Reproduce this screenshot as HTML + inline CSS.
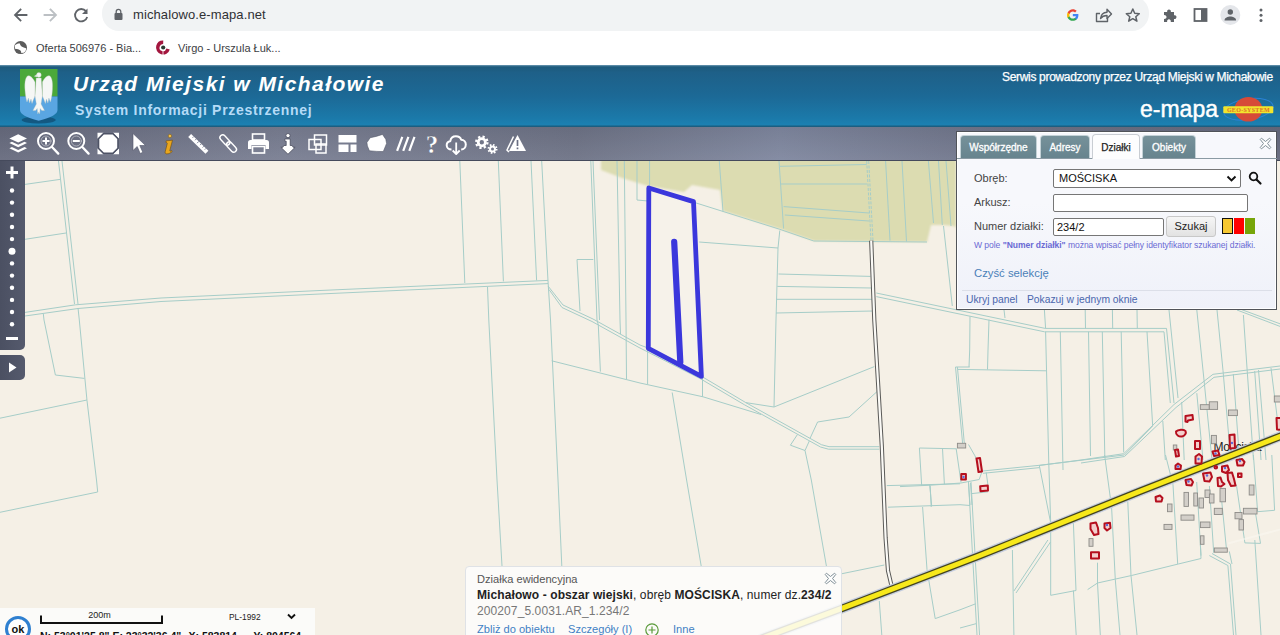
<!DOCTYPE html>
<html><head><meta charset="utf-8">
<style>
*{box-sizing:border-box;margin:0;padding:0}
html,body{width:1280px;height:635px;overflow:hidden;background:#fff;font-family:"Liberation Sans",sans-serif}
.abs{position:absolute}
#chrome{position:absolute;left:0;top:0;width:1280px;height:66px;background:#fff}
#omni{position:absolute;left:102px;top:-4px;width:1047px;height:35px;border-radius:17px;background:#f1f3f4}
#url{position:absolute;left:133px;top:7px;font-size:13px;line-height:16px;color:#303134;letter-spacing:0.1px}
.bm{position:absolute;top:41px;font-size:11px;line-height:14px;color:#3c4043}
#header{position:absolute;left:0;top:65px;width:1280px;height:62px;background:linear-gradient(#6f9bb5 0%,#1d5a7c 3%,#1e6088 12%,#1c6996 50%,#1b79a9 85%,#1c80b1 96%,#1a5675 100%)}
#title{position:absolute;left:73px;top:6px;font-size:21px;line-height:26px;font-weight:bold;font-style:italic;color:#fff;letter-spacing:1.45px;white-space:nowrap}
#sub{position:absolute;left:75px;top:37px;font-size:14px;line-height:16px;font-weight:bold;color:#b5dbf7;letter-spacing:0.7px;white-space:nowrap}
#serwis{position:absolute;left:1002px;top:5px;font-size:12px;line-height:14px;color:#fff;white-space:nowrap;letter-spacing:-0.32px;-webkit-text-stroke:0.25px #fff}
#emapa{position:absolute;left:1140px;top:31px;font-size:23px;line-height:26px;color:#fff;letter-spacing:0px;-webkit-text-stroke:0.45px #fff}
#toolbar{position:absolute;left:0;top:127px;width:1280px;height:34px;background:linear-gradient(rgba(0,0,0,.06),rgba(255,255,255,.05)),linear-gradient(90deg,#676b7e 0%,#797e92 22%,#6e7386 45%,#7f879f 61%,#6f7489 78%,#666a7e 100%);border-bottom:1px solid #454a5c}
#map{position:absolute;left:0;top:161px;width:1280px;height:474px;background:#f5f0e6;overflow:hidden}
#map svg{position:absolute;left:0;top:0}

#zoomctl{position:absolute;left:0;top:161px;width:25px;height:189px;background:linear-gradient(90deg,#4b5062,#555a6d);border-bottom-right-radius:5px}
#playbox{position:absolute;left:0;top:355px;width:25px;height:25px;background:linear-gradient(90deg,#4b5062,#555a6d);border-radius:0 5px 5px 0}
#panel{position:absolute;left:956px;top:131px;width:321px;height:179px;background:linear-gradient(#f7f8fc 40%,#eff1f9);border:1px solid #505359;box-shadow:0 0 0 1px rgba(255,255,255,.9) inset}
.tab{position:absolute;top:3px;height:23px;border:1px solid #c3d1d6;border-bottom:none;border-radius:4px 4px 0 0;background:linear-gradient(#76919a,#67848e);color:#fff;font-size:10px;line-height:23px;text-align:center;-webkit-text-stroke:0.3px #fff}
.tab.act{background:#fdfdfe;color:#222;border-color:#c9cdd3;top:2px;height:25px;line-height:25px;-webkit-text-stroke:0.25px #222}
#tabline{position:absolute;left:0;top:26px;width:320px;height:1px;background:#8a9aa3}
.lbl{position:absolute;left:17px;font-size:11px;line-height:14px;color:#444}
.inp{position:absolute;background:#fff;border:1px solid #767676;border-radius:2px;font-size:11px;line-height:16px;color:#111;padding-left:4px}
#hint{position:absolute;left:17px;top:108px;font-size:8.550px;line-height:10px;color:#6a6ad4;white-space:nowrap;letter-spacing:-0.05px}
#czysc{position:absolute;left:17px;top:134px;font-size:11.300px;line-height:14px;color:#4a7fb8}
#sep{position:absolute;left:5px;top:157.500px;width:310px;height:1px;background:#dcdfe8}
.lnk{position:absolute;top:161px;font-size:10.300px;line-height:13px;color:#4a66ad;white-space:nowrap}
#popup{position:absolute;left:465px;top:566px;width:377px;height:80px;background:rgba(253,253,252,.86);border:1px solid #dfe2e6;border-radius:4px 4px 0 0}
#popup div{position:absolute;left:11px;white-space:nowrap}
#status{position:absolute;left:0;top:608px;width:315px;height:30px;background:#fbfbf9}
</style></head><body>
<div id="chrome">
 <div id="omni"></div>
 <div id="url">michalowo.e-mapa.net</div>
 <div class="bm" style="left:36px">Oferta 506976 - Bia...</div>
 <div class="bm" style="left:178px">Virgo - Urszula Łuk...</div>
 <svg class="abs" style="left:0;top:0" width="1280" height="66" viewBox="0 0 1280 66">
  <!-- back -->
  <g fill="none" stroke="#5f6368" stroke-width="1.8" stroke-linecap="square"><path d="M26.5 15H15.5M20.5 9.5L15 15l5.5 5.5"/></g>
  <g fill="none" stroke="#bcc0c4" stroke-width="1.8" stroke-linecap="square"><path d="M44.5 15h11M50.5 9.5L56 15l-5.500 5.500"/></g>
  <!-- reload -->
  <path d="M86 11.200A6.200 6.200 0 1 0 87.200 17" fill="none" stroke="#5f6368" stroke-width="1.800"/>
  <path d="M87.500 8.500v5.500h-5.500z" fill="#5f6368"/>
  <!-- lock -->
  <rect x="114.500" y="13" width="8" height="7" rx="1" fill="#5f6368"/>
  <path d="M116.200 13.500v-1.800a2.300 2.300 0 0 1 4.600 0v1.800" fill="none" stroke="#5f6368" stroke-width="1.300"/>
  <!-- globe -->
  <circle cx="20.500" cy="47.600" r="6.500" fill="#5c5c5c"/>
  <path d="M15 45.200C16.500 43.800 18.500 43.200 20 43.600C20 45.500 21.500 47.400 26 48.300C26.300 50 25.500 51.800 24 52.800C23 52.800 21.800 53.200 21.200 52.800C21.500 51 20 49.300 15 48.800C14.700 47.500 14.700 46.200 15 45.200Z" fill="#fff"/>
  <!-- virgo -->
  <circle cx="163" cy="47.600" r="5.250" fill="none" stroke="#a3163e" stroke-width="3.500" stroke-dasharray="22.900 10.100" transform="rotate(15 163 47.600)"/>
  <path d="M163 50.500V55" stroke="#fff" stroke-width=".8"/>
  <circle cx="163.200" cy="47.500" r="2.100" fill="#2b3a32"/>
  <!-- G -->
  <g transform="translate(1067 9.200) scale(0.485)">
   <path d="M23.500 12.300c0-.8-.1-1.600-.2-2.300H12v4.500h6.500c-.3 1.500-1.100 2.700-2.400 3.600v3h3.800c2.300-2.100 3.600-5.200 3.600-8.800z" fill="#4285f4"/>
   <path d="M12 24c3.200 0 6-1.100 7.900-2.900l-3.800-3c-1.100.7-2.500 1.200-4.100 1.200-3.100 0-5.800-2.100-6.700-5H1.300v3.100C3.300 21.300 7.300 24 12 24z" fill="#34a853"/>
   <path d="M5.300 14.300c-.2-.7-.4-1.500-.4-2.300s.1-1.600.4-2.300V6.600H1.300C.5 8.200 0 10 0 12s.5 3.800 1.300 5.400l4-3.100z" fill="#fbbc05"/>
   <path d="M12 4.800c1.800 0 3.300.6 4.600 1.800l3.400-3.400C17.900 1.200 15.200 0 12 0 7.300 0 3.300 2.700 1.300 6.600l4 3.100c.9-2.900 3.600-4.900 6.700-4.900z" fill="#ea4335"/>
  </g>
  <!-- share -->
  <g fill="none" stroke="#5f6368" stroke-width="1.400" stroke-linejoin="round"><path d="M1100 13.500h-3.500v8h11v-3.500"/><path d="M1100.500 18.500c.5-4 3-6 6.500-6.200v-3l4.500 4.700-4.500 4.500v-3c-3 0-5 1-6.500 3z"/></g>
  <!-- star -->
  <path d="M1132.800 9l1.900 4.300 4.600.4-3.500 3 1.100 4.500-4.100-2.500-4.100 2.500 1.100-4.500-3.500-3 4.600-.4z" fill="none" stroke="#5f6368" stroke-width="1.500" stroke-linejoin="round"/>
  <!-- puzzle -->
  <path d="M1164 12h3.200a1.900 1.900 0 1 1 3.600 0h3.200v3.300a1.900 1.900 0 1 1 0 3.600V22h-3.300a1.900 1.900 0 1 0-3.500 0H1164v-3.200a1.900 1.900 0 1 0 0-3.600z" fill="#5f6368"/>
  <!-- side panel -->
  <rect x="1194.500" y="9" width="12" height="12" fill="none" stroke="#5f6368" stroke-width="1.800"/><rect x="1201" y="9" width="5.500" height="12" fill="#5f6368"/>
  <!-- profile -->
  <circle cx="1230.300" cy="15" r="10" fill="#e4e6ea"/><circle cx="1230.300" cy="12" r="2.700" fill="#5f6368"/><path d="M1224.500 20.500c0-3 3.500-4 5.800-4s5.800 1 5.800 4z" fill="#5f6368"/>
  <!-- dots -->
  <circle cx="1261" cy="10" r="1.500" fill="#5f6368"/><circle cx="1261" cy="15.300" r="1.500" fill="#5f6368"/><circle cx="1261" cy="20.600" r="1.500" fill="#5f6368"/>
 </svg>
</div>
<div id="header">
 <svg class="abs" style="left:0;top:0" width="1280" height="62" viewBox="0 65 1280 62">
 <ellipse cx="38.700" cy="120" rx="17" ry="3.500" fill="#0d3a5c" opacity=".55"/>
 <clipPath id="sh"><path d="M20 69h37.500v41c0 4-6 7.500-18.800 10.800C26 117.500 20 114 20 110z"/></clipPath>
 <g clip-path="url(#sh)"><rect x="19" y="68" width="40" height="28.500" fill="#4ba83a"/><rect x="19" y="96.500" width="40" height="26" fill="#5aa6e2"/></g>
 <g fill="#f5f7f5" stroke="#b9c4c0" stroke-width=".35">
  <path d="M35 82C33 78 30 75 27.500 76C25 78 24.500 84 25 90C25.300 95 26 99 27 102L28.500 98L29.500 103L31 99L32 103.500L33.500 99.500L35 96Z"/>
  <path d="M42.400 82C44.400 78 47.400 75 49.900 76C52.400 78 52.900 84 52.400 90C52.100 95 51.400 99 50.400 102L48.900 98L47.900 103L46.400 99L45.400 103.500L43.900 99.500L42.400 96Z"/>
  <path d="M36.200 78L41.200 78L42.400 96L41 104L44.500 110.500L41.800 110.500L40.200 108.500L39.600 114L38.700 112L37.800 114L37.200 108.500L35.600 110.500L32.900 110.500L36.400 104L35 96Z"/>
  <circle cx="38.900" cy="75" r="2.400"/><path d="M36.800 74.500L34.300 76.200L37 77Z"/>
 </g>
 <!-- geosystem -->
 <ellipse cx="1248.400" cy="109.300" rx="25" ry="10.500" fill="none" stroke="#2b82d6" stroke-width="1" transform="rotate(-8 1248.400 109.300)"/>
 <ellipse cx="1248.400" cy="109.300" rx="14" ry="12.300" fill="#d64a38"/>
 <rect x="1223.300" y="106.200" width="50" height="7" rx="1" fill="#f1e52e"/>
 <text x="1248.400" y="112" font-family="Liberation Serif" font-size="6" font-weight="bold" fill="#e0702a" text-anchor="middle" letter-spacing=".3">GEO-SYSTEM</text>
</svg>
 <div id="title">Urząd Miejski w Michałowie</div>
 <div id="sub">System Informacji Przestrzennej</div>
 <div id="serwis">Serwis prowadzony przez Urząd Miejski w Michałowie</div>
 <div id="emapa">e-mapa</div>
</div>
<div id="toolbar">
<svg class="abs" style="left:0;top:0" width="540" height="33" viewBox="0 127 540 33">
 <g fill="#fff" stroke="none">
  <!-- layers -->
  <path d="M18.200 134.300l8.800 4.100-8.800 4.100-8.800-4.100z"/>
  <path d="M11.900 141.700L9.400 142.900l8.800 4.300 8.800-4.300-2.500-1.200-6.300 3.100z"/>
  <path d="M11.900 147L9.400 148.200l8.800 4.300 8.800-4.300-2.500-1.200-6.300 3.100z"/>
  <path d="M11.900 149.500L9.400 150.700l8.800 3.100 8.800-3.100-2.500-1.200-6.300 2.400z" opacity=".0"/>
 </g>
 <!-- zoom in -->
 <g fill="none" stroke="#fff" stroke-width="2" stroke-linecap="round">
  <circle cx="46" cy="141" r="8"/><path d="M52 147l6.300 6.600" stroke-width="2.300"/>
  <circle cx="46" cy="141" r="5" stroke-width=".8" opacity=".55"/><path d="M46 137.500v7M42.500 141h7" stroke-width="2" stroke-linecap="butt"/>
  <circle cx="76.300" cy="141" r="8"/><path d="M82.300 147l6.300 6.600" stroke-width="2.300"/>
  <circle cx="76.300" cy="141" r="5" stroke-width=".8" opacity=".55"/><path d="M72.800 141h7" stroke-width="2" stroke-linecap="butt"/>
 </g>
 <!-- full extent -->
 <g fill="#fff">
  <path d="M97.500 132.800h6l-6 6zM119 132.800v6l-6-6zM97.500 154.200v-6l6 6zM119 154.200h-6l6-6z"/>
  <path d="M103.500 133.800h9.500l5 5v9.400l-5 5h-9.500l-5-5v-9.400z" stroke="#4e5366" stroke-width="1.600"/>
 </g>
 <!-- pointer -->
 <path d="M133 133.500v17l4.200-4 3 7 2.600-1.200-3-6.800h5.700z" fill="#fff" stroke="#50556a" stroke-width="0.600"/>
 <!-- info i -->
 <g stroke-linejoin="round"><circle cx="169.900" cy="136" r="1.700" fill="#f0c04a" stroke="#7a5510" stroke-width=".5"/>
 <path d="M166.300 140.800l6.200-.6-2.700 10.300c-.2.700.4.900 1 .5l.8-.5.500 1.100c-1.500 1.400-3.300 2.300-5.200 2.300-1.500 0-2-.9-1.700-2.200l2-7.900c.2-.8-.1-1.200-1.300-1.400z" fill="#e9a61e" stroke="#6e4c0e" stroke-width=".6"/></g>
 <!-- ruler -->
 <g transform="rotate(44 198.300 143.800)"><rect x="186.300" y="141.700" width="24" height="4.200" fill="#fff"/><path d="M190 141.700v1.800M193.500 141.700v1.800M197 141.700v2.500M200.500 141.700v1.800M204 141.700v1.800M207 141.700v1.800" stroke="#7a7f93" stroke-width=".9"/></g>
 <!-- chain -->
 <g fill="none" stroke="#fff" stroke-width="1.400" transform="rotate(47 228.200 143.500)"><rect x="217.400" y="140.700" width="12" height="5.600" rx="2.800"/><rect x="227" y="140.700" width="12" height="5.600" rx="2.800"/></g>
 <!-- printer -->
 <g fill="#fff"><rect x="252.500" y="134" width="12" height="6" fill="none" stroke="#fff" stroke-width="1.600"/><path d="M250.500 140h16a2.500 2.500 0 0 1 2.500 2.500v6.500h-3.500v-4h-14v4h-3.500v-6.500a2.500 2.500 0 0 1 2.500-2.500z"/><rect x="252.500" y="146.500" width="12" height="6.500" fill="none" stroke="#fff" stroke-width="1.600"/></g>
 <!-- info download -->
 <g fill="#fff" stroke="#3d4152" stroke-width="0.700"><circle cx="288" cy="135.600" r="2.100"/><path d="M284.800 139h5.400v6.500h2l.9 1.800h2l-7.100 6.900-7.100-6.900h2l.9-1.800h2.400v-4.300h-1.400z"/></g>
 <!-- overlapping squares -->
 <g fill="none" stroke="#fff" stroke-width="1.500"><rect x="314.500" y="135" width="12" height="10"/><rect x="309" y="139.500" width="12" height="10"/><rect x="316" y="144" width="10" height="9"/></g>
 <!-- layout -->
 <g fill="#fff"><rect x="338.500" y="135" width="18" height="7.500"/><rect x="338.500" y="144.500" width="10" height="7.500"/><rect x="350.500" y="144.500" width="6" height="7.500"/></g>
 <!-- polygon -->
 <path d="M366.900 142.600l3.300-4.900 6-1.300 6.300-2 3.300 4.900.8 4.100-3.300 8.200-6.500-.2-7.400-.6-2-4.900z" fill="#fff" stroke="#555a6c" stroke-width=".6"/>
 <!-- /// -->
 <path d="M402.300 136.800l-5.200 14M408.400 136.800l-5.200 14M414.500 136.800l-5.200 14" stroke="#fff" stroke-width="2.200" fill="none"/>
 <!-- ? -->
 <text x="425.800" y="152.500" font-family="Liberation Serif" font-size="25" font-weight="bold" fill="#fff" stroke="#555a6c" stroke-width=".3">?</text>
 <!-- cloud -->
 <g fill="none" stroke="#fff" stroke-width="2" stroke-linejoin="round"><path d="M451.500 149.500c-3 0-4.800-2-4.800-4.200s1.500-3.900 3.600-4.100c.4-3 2.800-4.900 5.600-4.900 2.500 0 4.600 1.400 5.300 3.500 2.700.1 4.600 2.100 4.600 4.700 0 2.700-2 4.900-4.600 4.900"/><path d="M456.200 142.500v11M452.700 150.500l3.500 3.500 3.500-3.500" stroke-width="1.800"/></g>
 <!-- gears -->
 <g fill="none" stroke="#fff"><circle cx="481.800" cy="142.300" r="3.600" stroke-width="2.800"/><circle cx="481.800" cy="142.300" r="5.700" stroke-width="2.200" stroke-dasharray="2.240 2.240"/><circle cx="492.500" cy="148.900" r="2.500" stroke-width="2"/><circle cx="492.500" cy="148.900" r="4.100" stroke-width="1.800" stroke-dasharray="1.610 1.610"/></g>
 <!-- warning -->
 <g><path d="M517.500 135l8.500 16h-17z" fill="#fff"/><path d="M513.500 136.500l-6.500 13.500 2 2" fill="none" stroke="#fff" stroke-width="1.500"/><path d="M517.500 140v6M517.500 147.500v1.800" stroke="#6a6f84" stroke-width="1.700"/></g>
</svg>
</div>
<div id="map">
<svg id="mapsvg" width="1280" height="474" viewBox="0 161 1280 474">
<defs><filter id="bl" x="-5%" y="-5%" width="110%" height="110%"><feGaussianBlur stdDeviation="1.200"/></filter></defs>
<!-- green area -->
<path filter="url(#bl)" fill="#dcdcb1" d="M601 159L601 170L622 178L648 186L684 192L692 185L720 190L723 211L780 229L814 241L927 242L931 225L943 225L954 226L956 228L956 159Z"/>
<g fill="none" stroke="#a6cdc8" stroke-width="1">
<!-- top-left block -->
<path d="M58.500 161L74.500 304M62 161L78 304"/>
<path d="M25 184.400L60 179.400M25 239.300L66 233"/>
<path d="M25 312.400L75.600 304.800L161 298L320 290.500L548 280.400"/>
<path d="M25 316L78 308.500L161 301.500L320 294L548 283.600"/>
<path d="M43.300 313.700L44 320L55.400 375L84.400 378.400"/>
<path d="M78 308L79.300 320L87 400.600L96.500 480L97.700 492L0 512.300"/>
<path d="M0 418.200L87 400"/>
<!-- mid verticals -->
<path d="M459.800 161L464.800 283M498.300 161L503.400 281.400M531 161L536.600 280.400"/>
<path d="M541.700 161L548 281L550.500 320L558 480L561.800 566"/>
<path d="M487.500 287L488.800 320L497 480L502 566"/>
<path d="M590.800 161L597 320L598.300 325L600.400 371.600M593 161L599.500 320"/>
<path d="M617 161L620 320L620.500 334M624.300 161L626 320L626.500 379"/>
<path d="M637 161L637 200L648 201"/>
<path d="M577 259.500L593.300 259.500M577 259.500L580 311"/>
<!-- diagonal ditch -->
<path d="M548 286L563 305L593 319L640 345L648 348L701 376L745.800 402.600L821.400 444.700L829 446.700L879.300 446.700"/>
<path d="M549 289.500L562 307.500L592 321.500L639 347.500L700 378.500L744.500 404.800L820.500 447L828.500 449.200L879.300 449.200"/>
<path d="M551.700 360.800L640 383L703 396.800L761 414.500"/>
<path d="M647.600 348L647.600 384.200M702.500 376L702.500 396.800"/>
<!-- around selected parcel -->
<path d="M649.600 161L649.600 186M719.300 161L723 211.600"/>
<path d="M693 202L779.800 229.300L813.800 241L927 242"/>
<path d="M779 161L783.600 228.500M779.800 230.500L778 248L776 320L774 407"/>
<path d="M699.200 242L778 248"/>
<path d="M780 166.300L866.700 164.500M781 184L867 184M783.600 206.600L869 213M784.800 215L869 221"/>
<path d="M866.700 161L871 240.600M868.700 161L873 240.600" stroke-dasharray="3 1.500"/>
<path d="M885.600 161L890 240.600M902 161L906.500 241.500M928.400 161L933.500 223M938.500 161L942.300 225M946 161L951 226"/>
<path d="M943.500 226L952.300 306"/>
<path d="M778.500 274L870.500 276.400M777.300 286.400L871.500 288M776.500 299.300L872.500 299.300M776 313L873 311"/>
<path d="M876.300 293L1045.200 328.400L1166.500 328.400L1174 403M876.300 296.600L1044.500 331.800L1164 331.800L1170.300 403"/>
<path d="M745.800 402.600L774 407L874.300 366.600"/>
<path d="M672.200 392.500L686.600 480L701.200 566"/>
<path d="M876.800 391.800L849 417L817.600 422L810 438.400"/>
<path d="M797.400 434.600L790.400 445.200L805 450.500L809.300 441"/>
<path d="M805 450.500L811.300 480L826.400 566"/>
<path d="M955.500 367L969.700 367M955.500 367L962.600 443.300M957.400 367L964.300 443M969.700 350L969 367M988 350L987.500 369.500M958 369.400L1046 370.800"/>
<path d="M919.400 448L956.700 448.800M919.400 448L921.700 485.900M942.500 448.500L944.400 484.200M956.200 448.800L961 482.300M968.500 444.500L975 455.900L981.500 472.900L979.200 479.500L961 483L930.700 485.200L900 486.600M930.200 485.500L931.200 507M968.500 483L970 505M970.500 483L972 505M986.200 472.400L987.900 484.700M970.900 493.700L988 491.800M982.700 471L1039.400 465.300M983 473.300L1039.700 467.600"/>
<path d="M842 573.700L884.300 565"/>
<path d="M886.800 485.600L960 483.800M1039.400 465.300L1124.400 455L1152.700 426M888 507.200L960 504.700L970 505.500"/>
<path d="M929.700 485L931.700 506M922.600 507L927 569.500L935.200 618.600L960 609.800L975.600 603.800"/>
<path d="M879.300 601L881.800 635"/>
<path d="M960 628L976 623.700"/>
<!-- right block under/around panel -->
<path d="M1004 310L1005 318M1044.400 310L1045.600 328.400M1085.200 310L1085.500 328.400M1112.400 310L1112.700 328.400M1137 310L1137.300 328.400"/>
<path d="M970 316.400L969.700 350M989 319.600L988 350"/>

<path d="M1045.600 331.800L1048.700 460L1050.700 523L1050.700 595.300L1076 590.500L1073.400 523"/>
<path d="M1060.300 331.800L1062.800 460L1063 470"/>
<path d="M1088.500 331.800L1090.500 456M1102.300 331.800L1104.800 456M1121.200 331.800L1123.700 452.400M1147 331.800L1152.700 426"/>
<path d="M1039 465.500L1081 460L1123.700 453.700L1174 404.500L1213 374.300L1280 366"/>
<path d="M1081 463L1124.500 456.500L1176 407.500L1214 377.300L1280 369"/>
<path d="M1169 310L1178 398M1196.800 310L1203.800 378L1212 460M1217 310L1223 370.500L1230.800 460M1243.400 315L1247 368L1253.500 460"/>
<path d="M1237 310L1280 326.400M1240 309L1280 323.800"/>
<path d="M1233.300 374L1239.600 460M1254.700 371L1261 460M1258.500 370L1266 460M1271 368L1280 440"/>
<path d="M1181.700 402L1184.200 460M1196.800 393.200L1203 460M1162.800 421L1165.300 460"/>
<!-- lower right -->
<path d="M1039.400 465.800L1050.700 523"/>
<path d="M1104.600 455L1111.600 507.400L1115.300 579.700L1120 635"/>
<path d="M1127.800 501.800L1131 575.500L1137 635"/>
<path d="M1087.600 589.600L1097.500 583L1131.500 575.500L1178.300 564L1201 558.500"/>
<path d="M1097.500 562.700L1097.500 583L1100.300 635"/>
<path d="M1165.500 455L1173 484.800L1177.700 564"/>
<path d="M1200.400 544.300L1201 558.500"/>
<path d="M1073.400 590.500L1076.200 635"/>
<path d="M968.500 482L977 635M971 482L979.500 635"/>
<path d="M1012.400 550L1013.900 635M1047.900 540L1013.900 591M1050.500 542L1016 593"/>
<path d="M1209.400 555.600L1227.900 565.500L1233.500 635M1212 553.500L1230.500 564L1236 635"/>
<path d="M1229.300 551.400L1232 564"/>
<path d="M1254.800 540L1261 635"/>
<path d="M1236.400 484.800L1244.900 542.900L1260.500 543.400L1254.800 508.900"/>
<path d="M1253.400 455L1257.600 511.700L1274.600 510.300L1271.800 455"/>
<path d="M1196.700 482L1201 555.600M1209.400 486L1213.700 552.800M1220.800 491.800L1226.400 548.500"/>
</g>
<path d="M1228 543.500L1280 529.500" fill="none" stroke="#faf7f1" stroke-width="2" opacity=".55"/>
<!-- narrow road -->
<path d="M871.200 240.600L874.300 320L881.800 446L883 475L885.600 538L888 570.700L891.400 585.300" fill="none" stroke="#5a5a58" stroke-width="4.200"/>
<path d="M871.200 240.600L874.300 320L881.800 446L883 475L885.600 538L888 570.700L891.400 585.300" fill="none" stroke="#fbfaf6" stroke-width="2.200"/>
<text x="1213.500" y="450.800" font-family="Liberation Sans" font-size="12" letter-spacing="-0.250" fill="#222">Mościska</text>
<!-- yellow road -->
<path d="M760 638.900L842.500 608.200L980 555.500L1140 491.300L1285 434.500" fill="none" stroke="#c4cde0" stroke-width="10"/>
<path d="M760 638.900L842.500 608.200L980 555.500L1140 491.300L1285 434.500" fill="none" stroke="#45441f" stroke-width="7.600"/>
<path d="M760 638.900L842.500 608.200L980 555.500L1140 491.300L1285 434.500" fill="none" stroke="#f7e81b" stroke-width="5"/>
<!-- grey buildings -->
<g fill="#d3cfc9" stroke="#8d8b87" stroke-width="0.900">
<rect x="1200.300" y="404.700" width="9" height="4.700"/><rect x="1209.300" y="401.800" width="8.300" height="7.600"/><rect x="1228.400" y="410" width="9" height="5.600"/><rect x="1274.300" y="396" width="7" height="6"/>
<rect x="1211.400" y="435.400" width="5" height="8.300"/><rect x="1173.300" y="445" width="3.500" height="5"/>
<rect x="1184" y="492.400" width="4.500" height="14"/><rect x="1193.800" y="493" width="3.700" height="13"/><rect x="1199" y="498" width="4.500" height="10"/><rect x="1205" y="490" width="5" height="7.500"/><rect x="1209.400" y="494" width="4.600" height="9"/><rect x="1220" y="488.400" width="5.500" height="13.400"/><rect x="1249.200" y="485" width="4.800" height="10"/>
<rect x="1167.500" y="504" width="4.500" height="7.700"/><rect x="1181" y="515" width="13" height="5.200"/><rect x="1164" y="524.400" width="8" height="5"/><rect x="1200.400" y="522" width="9.600" height="5.600"/><rect x="1214.300" y="508.300" width="8" height="6.200"/><rect x="1243.400" y="508.300" width="13.600" height="5.700"/><rect x="1235" y="512.500" width="7" height="6.300"/><rect x="1239" y="519.600" width="4.500" height="10.400"/><rect x="1200.400" y="535.800" width="3.600" height="8.500"/><rect x="1214.300" y="548" width="13" height="4.200"/><rect x="1089" y="538.600" width="4" height="7.700"/>
<rect x="957.400" y="443.300" width="8.300" height="4.700"/>
</g>
<!-- red buildings -->
<g fill="#f3cfcd" stroke="#b50f1e" stroke-width="2" stroke-linejoin="round">
<path d="M976.500 458.500L980 458L982 471.500L978.500 472Z"/><rect x="961.300" y="474" width="4.600" height="5.500"/><path d="M980.200 486.300L987.800 485.500L988 490.500L980.500 491.200Z"/>
<path d="M1090.500 523.500L1096 522.500L1098 528L1098.500 534L1094 535L1090.500 529Z"/><path d="M1104.500 523.500L1110 522.800L1110.500 528L1107 530.500L1104.500 528Z"/><rect x="1091" y="552.300" width="8" height="6.300"/>
<path d="M1155.500 497L1160 495.500L1162.500 498L1161.500 501.500L1156 501.500Z"/>
<path d="M1185.500 416L1192.500 415L1193 419.500L1188 420.500L1187.500 422L1185.500 421.500Z"/>
<path d="M1176 431.500C1178 429.500 1184 429 1185.500 431C1186.500 433 1185 436 1182 436.500C1179 437 1175.500 435 1176 431.500Z"/>
<rect x="1195" y="441" width="5" height="8"/>
<path d="M1175 450L1178 449.500L1179 456L1176 456.500Z"/>
<path d="M1175.500 465.500L1178 463.500L1181 465.500L1180.500 469L1175.500 469Z"/>
<path d="M1195.500 456.500L1199 454L1202 456.500L1201.500 463.500L1195.500 463.500Z"/>
<path d="M1212.500 451.500L1218 450.500L1219.500 455L1214 456Z"/>
<path d="M1229.500 435L1234.500 434.500L1235 448L1230 448.500Z"/>
<path d="M1236.500 460L1242 459L1244.500 462L1243 465.500L1237.500 465.500Z"/>
<path d="M1222 466.500L1227.500 465.500L1229 470L1226 473L1222 471.500Z"/>
<path d="M1203 473.500L1210.500 472.500L1212 477L1209.500 481.500L1204.500 481Z"/>
<path d="M1185.500 480L1191 479L1193 482L1191.500 485.500L1186.500 485Z"/>
<path d="M1217.500 478L1220.500 477.500L1222 482L1224.500 484L1221 486.500L1218 486Z"/>
<path d="M1227.500 473L1232 472.500L1234 479L1235.500 485.500L1231 486L1228 480Z"/>
<rect x="1238" y="473.500" width="3.500" height="3.500"/>
<circle cx="1215.800" cy="467.200" r="1.300"/>
<path d="M1276.500 418L1282 418L1282 430L1277 429.500Z"/>
</g>
<g fill="#5a6ad8"><circle cx="963.500" cy="477" r="1.200"/><circle cx="1178" cy="466.500" r="1.200"/><circle cx="1198.500" cy="459" r="1.200"/><circle cx="1215.500" cy="453.500" r="1.200"/><circle cx="1232" cy="443" r="1.200"/><circle cx="1240" cy="461" r="1.200"/><circle cx="1207" cy="475.500" r="1.200"/><circle cx="1188.500" cy="481.500" r="1.200"/><circle cx="1107" cy="525" r="1.200"/><circle cx="1225" cy="468" r="1.200"/></g>
<!-- selected parcel -->
<path d="M648.800 188L693.500 201.600L701.400 376.300L648.300 348.300Z" fill="rgba(255,255,255,.18)" stroke="#3b37dc" stroke-width="4.800" stroke-linejoin="round"/>
<path d="M674.200 241.800L680.300 362" fill="none" stroke="#3b37dc" stroke-width="6.200" stroke-linecap="round"/>
</svg>
</div>

<div id="zoomctl">
<svg class="abs" style="left:0;top:0" width="25" height="189" viewBox="0 161 25 189">
 <path d="M12 166.500v12M6 172.500h12" stroke="#fff" stroke-width="3"/>
 <g fill="#fff">
  <circle cx="12" cy="190.500" r="2.200"/><circle cx="12" cy="202.600" r="2.200"/><circle cx="12" cy="214.800" r="2.200"/><circle cx="12" cy="227" r="2.200"/><circle cx="12" cy="239.100" r="2.200"/>
  <circle cx="12" cy="251.300" r="3.500"/>
  <circle cx="12" cy="263.400" r="2.200"/><circle cx="12" cy="275.600" r="2.200"/><circle cx="12" cy="287.700" r="2.200"/><circle cx="12" cy="299.900" r="2.200"/><circle cx="12" cy="312" r="2.200"/><circle cx="12" cy="324.200" r="2.200"/>
 </g>
 <path d="M6 338.500h12" stroke="#fff" stroke-width="3"/>
</svg>
</div>
<div id="playbox"><svg class="abs" style="left:0;top:0" width="25" height="25"><path d="M9 7.500l7.500 5-7.500 5z" fill="#fff"/></svg></div>

<div id="panel">
 <div id="tabline"></div>
 <div class="tab" style="left:3px;width:77px">Współrzędne</div>
 <div class="tab" style="left:83px;width:50px">Adresy</div>
 <div class="tab act" style="left:135px;width:48px">Działki</div>
 <div class="tab" style="left:185px;width:54px">Obiekty</div>
 <svg class="abs" style="left:302px;top:5px" width="13" height="13" viewBox="0 0 16 16"><path d="M3 1.500L8 5.500 13 1.500 14.500 3 10.500 8 14.500 13 13 14.500 8 10.500 3 14.500 1.500 13 5.500 8 1.500 3z" fill="#fff" stroke="#7a8a92" stroke-width="1.200" stroke-linejoin="round"/></svg>
 <div class="lbl" style="top:39px">Obręb:</div>
 <div class="inp" style="left:96px;top:37px;width:188px;height:19px;padding-left:5px;line-height:17px">MOŚCISKA
  <svg class="abs" style="right:3px;top:5px" width="11" height="8" viewBox="0 0 11 8"><path d="M1.500 1.500l4 4 4-4" fill="none" stroke="#111" stroke-width="1.900"/></svg>
 </div>
 <svg class="abs" style="left:290px;top:38px" width="16" height="16" viewBox="0 0 16 16"><circle cx="6.500" cy="6.500" r="3.800" fill="none" stroke="#111" stroke-width="1.800"/><path d="M9.500 9.500l4 4" stroke="#111" stroke-width="2.200" stroke-linecap="round"/></svg>
 <div class="lbl" style="top:63px">Arkusz:</div>
 <div class="inp" style="left:96px;top:62px;width:195px;height:18px"></div>
 <div class="lbl" style="top:87px">Numer działki:</div>
 <div class="inp" style="left:96px;top:86px;width:111px;height:18px;padding-left:3px">234/2</div>
 <div class="abs" style="left:209px;top:84px;width:50px;height:21px;border:1px solid #c8c8c8;border-radius:3px;background:linear-gradient(#f6f6f6,#e2e2e2);font-size:11px;line-height:19px;text-align:center;color:#222">Szukaj</div>
 <div class="abs" style="left:265px;top:86px;width:11px;height:16px;background:#f6c831;border:1px solid #111"></div>
 <div class="abs" style="left:277px;top:86px;width:10px;height:16px;background:#f00"></div>
 <div class="abs" style="left:288px;top:86px;width:10px;height:16px;background:#76a509"></div>
 <div id="hint">W pole <b>"Numer działki"</b> można wpisać pełny identyfikator szukanej działki.</div>
 <div id="czysc">Czyść selekcję</div>
 <div id="sep"></div>
 <div class="lnk" style="left:9px">Ukryj panel</div>
 <div class="lnk" style="left:70px">Pokazuj w jednym oknie</div>
</div>

<div id="popup">
 <div style="top:4.500px;font-size:11.100px;line-height:14px;color:#555">Działka ewidencyjna</div>
 <div style="top:20.500px;font-size:12px;line-height:14px;color:#222;letter-spacing:0.1px"><b>Michałowo - obszar wiejski</b>, obręb <b>MOŚCISKA</b>, numer dz.<b>234/2</b></div>
 <div style="top:37px;font-size:12px;line-height:14px;color:#777;letter-spacing:0.1px">200207_5.0031.AR_1.234/2</div>
 <div style="top:55px;font-size:11.100px;line-height:14px;color:#3f7fc4">Zbliż do obiektu</div>
 <div style="top:55px;left:102px;font-size:11.100px;line-height:14px;color:#3f7fc4">Szczegóły (I)</div>
 <div style="top:55px;left:207px;font-size:11.100px;line-height:14px;color:#3f7fc4">Inne</div>
 <svg class="abs" style="left:178px;top:54.500px" width="16" height="16" viewBox="0 0 16 16"><circle cx="8" cy="8" r="6.200" fill="none" stroke="#5a9a3a" stroke-width="1.200"/><path d="M8 4.500v7M4.500 8h7" stroke="#5a9a3a" stroke-width="1.200"/></svg>
 <svg class="abs" style="left:358px;top:5px" width="13" height="13" viewBox="0 0 16 16"><path d="M3 1.500L8 5.500 13 1.500 14.500 3 10.500 8 14.500 13 13 14.500 8 10.500 3 14.500 1.500 13 5.500 8 1.500 3z" fill="#fff" stroke="#7a8a92" stroke-width="1.200" stroke-linejoin="round"/></svg>
</div>

<div id="status">
 <svg class="abs" style="left:0;top:0" width="315" height="30" viewBox="0 608 315 30">
  <circle cx="18" cy="629" r="11.500" fill="#fff" stroke="#2f80d0" stroke-width="3"/>
  <text x="18" y="632.500" font-size="11" font-weight="bold" text-anchor="middle" fill="#111" font-family="Liberation Sans">ok</text>
  <path d="M41 615.500v7.500h121v-7.500" fill="none" stroke="#111" stroke-width="2"/>
  <text x="99.500" y="617.800" font-size="9" text-anchor="middle" fill="#222" font-family="Liberation Sans">200m</text>
  <text x="229" y="620" font-size="8.400" fill="#222" font-family="Liberation Sans">PL-1992</text>
  <path d="M288 614.500l3.500 3.500 3.500-3.500" fill="none" stroke="#111" stroke-width="1.900"/>
  <text x="40" y="640" font-size="10.500" font-weight="bold" fill="#111" font-family="Liberation Sans">N: 53°01'25.8" E: 23°32'36.4"</text>
  <text x="188.500" y="640" font-size="10.500" font-weight="bold" fill="#111" font-family="Liberation Sans">X: 583814</text>
  <text x="253.500" y="640" font-size="10.500" font-weight="bold" fill="#111" font-family="Liberation Sans">Y: 804564</text>
 </svg>
</div>
</body></html>
